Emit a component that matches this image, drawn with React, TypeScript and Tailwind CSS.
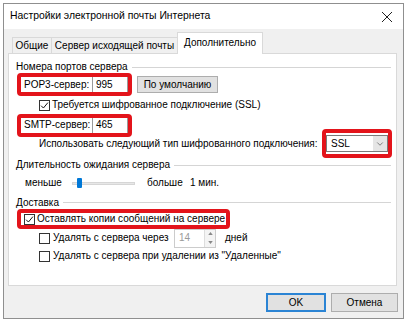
import { ChevronDown } from 'lucide-react';

const RED = 'border-[#e3141b]';

function Check({ checked = false }: { checked?: boolean }) {
  return (
    <span className="flex h-[11px] w-[11px] shrink-0 items-center justify-center border border-[#333] bg-white">
      {checked && (
        <svg viewBox="0 0 10 10" className="h-[9px] w-[9px]">
          <path d="M1.2 5.2 L3.8 7.8 L8.8 1.8" fill="none" stroke="#111" strokeWidth="1.1" />
        </svg>
      )}
    </span>
  );
}

function GroupLabel({ text, className }: { text: string; className: string }) {
  return (
    <div className={`flex items-center gap-[4px] ${className}`}>
      <span>{text}</span>
      <div className="h-px flex-1 bg-[#d5d5d5]" />
    </div>
  );
}

function PortBox({ label, value }: { label: string; value: string }) {
  return (
    <div className={`ml-[1px] flex h-[23px] w-[115px] shrink-0 items-center rounded-[4px] border-[4px] ${RED} bg-white`}>
      <span className="ml-[3px] w-[68px] shrink-0">{label}</span>
      <div className="flex h-full flex-1 items-center border-x border-[#9a9a9a] pl-[3px]">{value}</div>
    </div>
  );
}

export default function App() {
  return (
    <div className="h-[320px] w-[407px] overflow-hidden whitespace-nowrap bg-white pl-[3px] pt-[3px] font-['Liberation_Sans',Arial,sans-serif] text-[10px] leading-none text-black">
      <div className="flex h-[316px] w-[401px] flex-col border border-[#8f8f8f] bg-[#f0f0f0]">
        {/* Заголовок окна */}
        <div className="flex h-[25px] shrink-0 items-center justify-between bg-white pl-[6px] pr-[10px]">
          <span className="text-[10.4px]">Настройки электронной почты Интернета</span>
          <svg viewBox="0 0 12 12" className="h-[12px] w-[12px]">
            <path d="M1 1 L11 11 M11 1 L1 11" stroke="#222" strokeWidth="1" />
          </svg>
        </div>

        <div className="flex flex-1 flex-col px-[4px]">
          {/* Вкладки */}
          <div className="relative z-10 flex h-[24px] items-end pl-[4px]">
            <div className="flex h-[16px] w-[39px] items-center justify-center border-l border-t border-[#d9d9d9]">Общие</div>
            <div className="flex h-[16px] w-[126px] items-center justify-center border-l border-t border-[#d9d9d9]">
              Сервер исходящей почты
            </div>
            <div className="-mb-px flex h-[22px] w-[86px] items-start justify-center border-x border-t border-[#d9d9d9] bg-white pt-[5px]">
              Дополнительно
            </div>
          </div>

          {/* Панель */}
          <div className="flex h-[233px] w-[389px] flex-col border border-[#d9d9d9] bg-white pl-[7px] pr-[5px]">
            <GroupLabel text="Номера портов сервера" className="mt-[7px] h-[12px]" />

            <div className="flex h-[23px] items-center">
              <PortBox label="POP3-сервер:" value="995" />
              <div className="ml-[5px] flex h-[17px] w-[81px] items-center justify-center border border-[#adadad] bg-[#e1e1e1]">
                По умолчанию
              </div>
            </div>

            <div className="flex h-[18px] items-center gap-[2px] pl-[23px]">
              <Check checked />
              <span>Требуется шифрованное подключение (SSL)</span>
            </div>

            <div className="flex h-[22px] items-center">
              <PortBox label="SMTP-сервер:" value="465" />
            </div>

            <div className="flex h-[15px] items-center pl-[23px]">
              <span>Использовать следующий тип шифрованного подключения:</span>
              <div className={`ml-auto mr-[-1px] flex h-[29px] w-[70px] shrink-0 items-center rounded-[4px] border-[4px] ${RED} bg-white`}>
                <div className="flex h-[17px] flex-1 items-center border border-[#7a7a7a]">
                  <span className="flex-1 pl-[4px]">SSL</span>
                  <span className="flex h-full w-[14px] items-center justify-center bg-[#e5e5e5]">
                    <ChevronDown className="h-[10px] w-[10px] text-[#444]" strokeWidth={1.5} />
                  </span>
                </div>
              </div>
            </div>

            <GroupLabel text="Длительность ожидания сервера" className="mt-[7px] h-[14px]" />

            <div className="mt-[2px] flex h-[18px] items-center pl-[9px]">
              <span className="w-[47px] shrink-0">меньше</span>
              <div className="relative flex h-[12px] w-[63px] shrink-0 items-center">
                <div className="h-[3px] w-full border border-[#d6d6d6] bg-[#e7e7e7]" />
                <div className="absolute left-[5px] top-[1px] h-[10px] w-[5px] rounded-[1px] bg-[#0078d7]" />
              </div>
              <span className="ml-[12px] w-[43px] shrink-0">больше</span>
              <span>1 мин.</span>
            </div>

            <GroupLabel text="Доставка" className="mt-[4px] h-[13px]" />

            <div className="flex h-[20px] items-center">
              <div className={`ml-[1px] flex h-[20px] w-[213px] shrink-0 items-center gap-[2px] rounded-[4px] border-[4px] ${RED} bg-white pl-[3px]`}>
                <Check checked />
                <span>Оставлять копии сообщений на сервере</span>
              </div>
            </div>

            <div className="flex h-[18px] items-center pl-[23px]">
              <Check />
              <span className="ml-[3px] w-[121px] shrink-0">Удалять с сервера через</span>
              <div className="flex h-[19px] w-[42px] shrink-0 items-center border border-[#cccccc] bg-white">
                <span className="flex-1 pl-[4px] text-[#9a9a9a]">14</span>
                <div className="flex h-full w-[11px] flex-col border-l border-[#dddddd] bg-[#f4f4f4]">
                  <div className="flex flex-1 items-center justify-center">
                    <svg viewBox="0 0 6 4" className="h-[3px] w-[5px]"><path d="M0 4 L3 0 L6 4 Z" fill="#888" /></svg>
                  </div>
                  <div className="flex flex-1 items-center justify-center">
                    <svg viewBox="0 0 6 4" className="h-[3px] w-[5px]"><path d="M0 0 L3 4 L6 0 Z" fill="#888" /></svg>
                  </div>
                </div>
              </div>
              <span className="ml-[9px]">дней</span>
            </div>

            <div className="flex h-[18px] items-center pl-[23px]">
              <Check />
              <span className="ml-[3px]">Удалять с сервера при удалении из "Удаленные"</span>
            </div>
          </div>

          {/* Кнопки */}
          <div className="flex flex-1 items-start justify-end gap-[5px] pr-[1px] pt-[7px]">
            <div className="flex h-[19px] w-[60px] items-center justify-center border-[2px] border-[#2b84d4] bg-[#e1e1e1]">OK</div>
            <div className="flex h-[19px] w-[67px] items-center justify-center border border-[#adadad] bg-[#e1e1e1]">Отмена</div>
          </div>
        </div>
      </div>
    </div>
  );
}
